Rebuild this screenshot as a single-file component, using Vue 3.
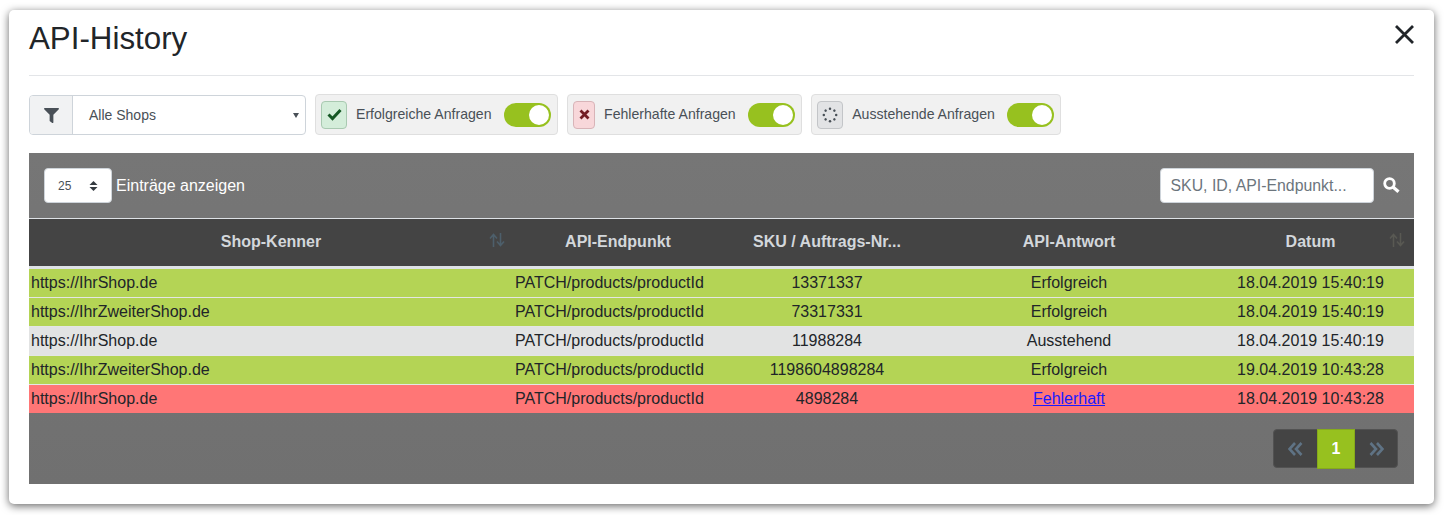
<script setup>
const chips = [
  { label: 'Erfolgreiche Anfragen', kind: 'ok' },
  { label: 'Fehlerhafte Anfragen', kind: 'err' },
  { label: 'Ausstehende Anfragen', kind: 'wait' }
]
const rows = [
  ['https://IhrShop.de', '13371337', 'Erfolgreich', '18.04.2019 15:40:19', 'green'],
  ['https://IhrZweiterShop.de', '73317331', 'Erfolgreich', '18.04.2019 15:40:19', 'green'],
  ['https://IhrShop.de', '11988284', 'Ausstehend', '18.04.2019 15:40:19', 'grey'],
  ['https://IhrZweiterShop.de', '1198604898284', 'Erfolgreich', '19.04.2019 10:43:28', 'green'],
  ['https://IhrShop.de', '4898284', 'Fehlerhaft', '18.04.2019 10:43:28', 'red']
]
const dots = [0, 45, 90, 135, 180, 225, 270, 315]
</script>

<template>
  <div class="page">
    <div class="modal">
      <header class="head">
        <h1>API-History</h1>
        <button class="close" aria-label="Schließen">
          <svg width="20" height="20" viewBox="0 0 20 20"><path d="M2 2L19 19M19 2L2 19" stroke="#212529" stroke-width="2.8" fill="none"/></svg>
        </button>
      </header>

      <div class="filters">
        <div class="shop">
          <span class="addon">
            <svg width="15" height="15" viewBox="0 0 512 512"><path fill="#495057" d="M487 0H25C3 0-9 27 7 43l185 185v206c0 8 4 15 10 20l80 56c16 11 38 0 38-20V228L505 43c16-16 4-43-18-43z"/></svg>
          </span>
          <span class="shop-select">Alle Shops<i class="caret"></i></span>
        </div>
        <div v-for="c in chips" :key="c.kind" class="chip">
          <span class="state" :class="c.kind">
            <svg v-if="c.kind === 'ok'" width="15" height="13" viewBox="0 0 15 13"><path d="M1.500 6.500L5.500 10.500L13.500 2" stroke="#155724" stroke-width="3" fill="none"/></svg>
            <svg v-else-if="c.kind === 'err'" width="11" height="11" viewBox="0 0 11 11"><path d="M1.500 1.500L9.500 9.500M9.500 1.500L1.500 9.500" stroke="#721c24" stroke-width="2.800" fill="none"/></svg>
            <svg v-else width="16" height="16" viewBox="0 0 16 16"><circle v-for="d in dots" :key="d" cx="8" cy="1.800" r="1.250" fill="#495057" :transform="`rotate(${d} 8 8)`"/></svg>
          </span>
          <span class="chip-label">{{ c.label }}</span>
          <span class="switch"><i></i></span>
        </div>
      </div>

      <section class="panel">
        <div class="tools">
          <div class="len">
            <span class="len-select">25
              <svg width="9" height="12" viewBox="0 0 9 12"><path fill="#343a40" d="M4.500 1L8.500 5H.5zM4.500 11L.5 7h8z"/></svg>
            </span>
            <span>Einträge anzeigen</span>
          </div>
          <div class="search">
            <input placeholder="SKU, ID, API-Endpunkt..." />
            <svg width="17" height="16" viewBox="0 0 17 16"><circle cx="6.500" cy="6.500" r="4.800" stroke="#fff" stroke-width="2.800" fill="none"/><path d="M10 10L15.500 14.800" stroke="#fff" stroke-width="3.200" fill="none"/></svg>
          </div>
        </div>
        <table>
          <colgroup><col class="c1"><col class="c2"><col class="c3"><col class="c4"><col class="c5"></colgroup>
          <thead>
            <tr>
              <th class="sort">Shop-Kenner
                <svg class="arrows" width="16" height="14" viewBox="0 0 16 14"><path d="M4.500 14V2M1 5.500L4.500 1.500L8 5.500M11.500 0V12M8 8.500L11.500 12.500L15 8.500" stroke="#4d5f6b" stroke-width="1.600" fill="none"/></svg>
              </th>
              <th>API-Endpunkt</th>
              <th>SKU / Auftrags-Nr...</th>
              <th>API-Antwort</th>
              <th class="sort">Datum
                <svg class="arrows" width="16" height="14" viewBox="0 0 16 14"><path d="M4.500 14V2M1 5.500L4.500 1.500L8 5.500M11.500 0V12M8 8.500L11.500 12.500L15 8.500" stroke="#595953" stroke-width="1.600" fill="none"/></svg>
              </th>
            </tr>
          </thead>
          <tbody>
            <tr v-for="(r, i) in rows" :key="i" :class="r[4]">
              <td>{{ r[0] }}</td>
              <td>PATCH/products/productId</td>
              <td class="mid">{{ r[1] }}</td>
              <td class="mid"><a v-if="r[4] === 'red'" href="#">{{ r[2] }}</a><template v-else>{{ r[2] }}</template></td>
              <td class="mid">{{ r[3] }}</td>
            </tr>
          </tbody>
        </table>
        <div class="foot">
          <nav class="pager">
            <span class="pg">
              <svg width="15" height="14" viewBox="0 0 15 14"><path d="M7 1L1.500 7L7 13M13.500 1L8 7L13.500 13" stroke="#5f7385" stroke-width="2.600" fill="none"/></svg>
            </span>
            <span class="pg on">1</span>
            <span class="pg last">
              <svg width="15" height="14" viewBox="0 0 15 14"><path d="M1.500 1L7 7L1.500 13M8 1L13.500 7L8 13" stroke="#5f7385" stroke-width="2.600" fill="none"/></svg>
            </span>
          </nav>
        </div>
      </section>
    </div>
  </div>
</template>

<style>
html, body { margin: 0; background: #fff; }
</style>

<style scoped>
.page { box-sizing: border-box; height: 515px; padding: 10px 0 0 9px; overflow: hidden; }
.modal {
  box-sizing: border-box;
  width: 1425px;
  height: 494px;
  padding: 0 20px;
  background: #fff;
  border-radius: 5px;
  box-shadow: 0 2px 8px rgba(0, 0, 0, .6);
  font-family: "Liberation Sans", Arial, sans-serif;
  color: #212529;
}
.head {
  display: flex;
  justify-content: space-between;
  height: 66px;
  box-sizing: border-box;
  border-bottom: 1px solid #e3e5e8;
}
h1 { margin: 9px 0 0; font-size: 31.3px; line-height: 40px; font-weight: 400; }
.close { border: 0; background: none; padding: 0; margin: 14px 0 0 0; height: 20px; }
.filters { display: flex; gap: 9px; margin-top: 18px; height: 41px; align-items: flex-start; }
.shop {
  display: flex; box-sizing: border-box; width: 277px; height: 40px; margin-top: 1px;
  border: 1px solid #ced4da; border-radius: 4px; overflow: hidden;
}
.addon {
  display: flex; align-items: center; justify-content: center; width: 42px;
  background: #f1f2f3; border-right: 1px solid #ced4da;
}
.shop-select {
  flex: 1; display: flex; align-items: center; justify-content: space-between;
  padding: 0 6px 0 16px; font-size: 14px; color: #495057;
}
.caret { width: 0; height: 0; border: 3px solid transparent; border-top: 5px solid #495057; border-bottom: 0; }
.chip {
  display: flex; align-items: center; box-sizing: border-box; height: 41px; padding: 0 6px 0 5px;
  background: #f1f1f1; border: 1px solid #dfdfdf; border-radius: 4px;
}
.state {
  display: flex; align-items: center; justify-content: center; box-sizing: border-box;
  width: 26px; height: 28px; border-radius: 4px; border: 1px solid;
}
.state.ok { background: #d4edda; border-color: #a9c9b1; }
.state.err { width: 22px; background: #f8d7da; border-color: #d8b4b8; }
.state.wait { background: #e2e3e5; border-color: #c3c5c8; }
.chip-label { margin: 0 0 1px 9px; font-size: 14.1px; color: #495057; }
.switch {
  display: block; box-sizing: border-box; width: 47px; height: 24px; margin-left: 12.5px; padding: 2px;
  background: #97c11f; border-radius: 12px;
}
.switch i { display: block; width: 20px; height: 20px; margin-left: 23px; background: #fff; border-radius: 50%; }
.panel {
  margin-top: 18px; height: 331px; display: flex; flex-direction: column;
  background: linear-gradient(#767676, #707070);
}
.tools {
  box-sizing: border-box; height: 65px; display: flex; justify-content: space-between; align-items: center;
  padding: 0 14px 0 15px; color: #fff; font-size: 16px;
}
.len { display: flex; align-items: center; gap: 4px; }
.len-select {
  display: flex; align-items: center; justify-content: space-between; box-sizing: border-box;
  width: 68px; height: 35px; padding: 0 13px; background: #fff; border: 1px solid #ced4da;
  border-radius: 4px; color: #495057; font-size: 12px;
}
.search { display: flex; align-items: center; gap: 9px; }
.search input {
  box-sizing: border-box; width: 214px; height: 35px; padding: 0 9.5px; background: #fff;
  border: 1px solid #ced4da; border-radius: 4px; font: 15.85px "Liberation Sans", Arial, sans-serif;
}
.search input::placeholder { color: #6c757d; opacity: 1; }
.search svg { margin-bottom: 2px; }
table { width: 100%; table-layout: fixed; border-collapse: separate; border-spacing: 0; font-size: 16px; }
.c1 { width: 484px; } .c2 { width: 210px; } .c3 { width: 208px; } .c4 { width: 276px; } .c5 { width: 207px; }
th {
  position: relative; box-sizing: border-box; height: 48px; padding: 0 0 2px; border-top: 1px solid #dee2e6;
  background: #444; color: #d3d7db; font-weight: 700; font-size: 16px; text-align: center;
}
.arrows { position: absolute; right: 8px; top: 14px; }
.sort:last-child .arrows { right: 9px; }
td {
  box-sizing: border-box; height: 29px; padding: 0 2px; border-top: 1px solid #e4e6e4; white-space: nowrap;
}
tbody tr:first-child td { height: 31px; border-top: 3px solid #dee2e6; }
tr.green td { background: #b4d455; }
tr.grey td { background: #e2e3e3; }
tr.red td { background: #ff7676; }
.mid { text-align: center; }
a { color: #1a1aff; }
.foot { flex: 1; display: flex; justify-content: flex-end; align-items: flex-start; padding: 16px 16px 0 0; }
.pager {
  display: flex; height: 39px; background: #444; border-radius: 4px; border: 1px solid #525252; box-sizing: border-box;
}
.pg { display: flex; align-items: center; justify-content: center; width: 43px; }
.pg.last { width: 42px; }
.pg.on { width: 38px; height: 40px; margin: -1px 0; background: #97c11f; color: #fff; font-weight: 700; font-size: 16px; border: 1px solid #86ab1b; box-sizing: border-box; }
</style>
